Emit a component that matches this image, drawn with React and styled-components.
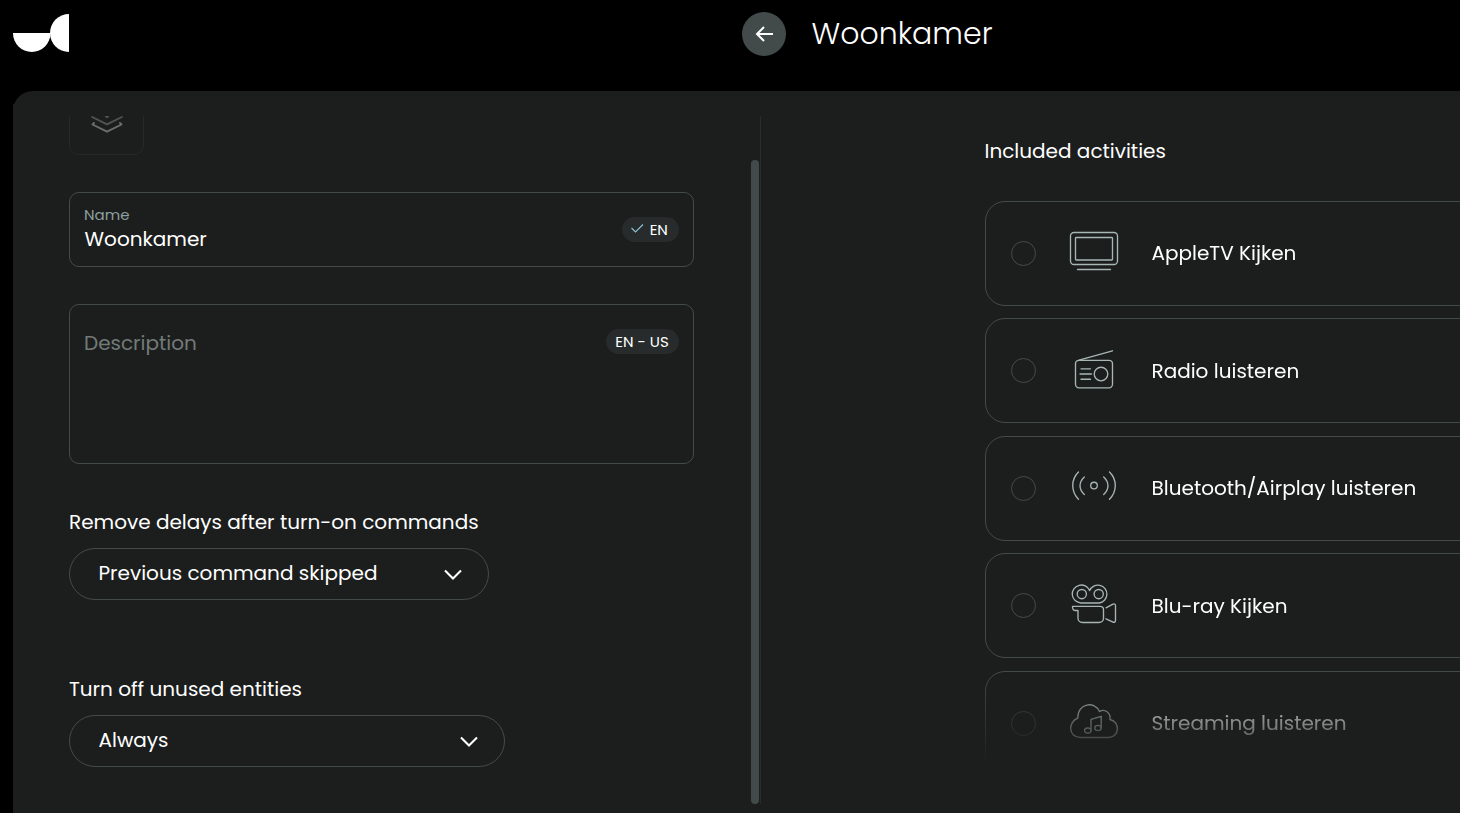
import React from "react";
import styled, { createGlobalStyle } from "styled-components";

const GlobalStyle = createGlobalStyle`
  * { box-sizing: border-box; }
  body {
    margin: 0;
    background: #000;
    overflow: hidden;
    color: #fff;
    font-family: Poppins, Inter, "Liberation Sans", sans-serif;
    font-size: 20px;
    line-height: 30px;
  }
`;

const Page = styled.div`
  width: 1460px;
  height: 813px;
  overflow: hidden;
  display: flex;
  flex-direction: column;
`;

const Header = styled.header`
  height: 91px;
  flex: none;
  display: flex;
  align-items: flex-start;
  padding: 12px 0 0 13px;
`;

const Logo = styled.svg`
  display: block;
  width: 56px;
  height: 38px;
  margin: 2px 673px 0 0;
`;

const BackButton = styled.button`
  width: 44px;
  height: 44px;
  padding: 0;
  border: 0;
  border-radius: 50%;
  background: #434b4a;
  display: grid;
  place-items: center;
`;

const Title = styled.h1`
  margin: 0 0 0 25.5px;
  font-size: 30px;
  font-weight: 300;
  line-height: 44px;
`;

const Panel = styled.main`
  flex: 1;
  margin-left: 13px;
  padding-top: 13px;
  background: #1c1e1d;
  border-top-left-radius: 20px;
  min-height: 0;
`;

const PanelBody = styled.div`
  height: 100%;
  background: #1c1e1d;
  display: flex;
  padding: 12px 0 9px 56px;
`;

const Settings = styled.section`
  flex: none;
  width: 692px;
  height: 688px;
  overflow: hidden;
  display: flex;
  border-right: 1px solid #292c2c;
`;

const SettingsForm = styled.div`
  flex: none;
  width: 625px;
  margin-right: 57px;
  height: 688px;
  overflow: hidden;
`;

const IconTile = styled.div`
  width: 75px;
  height: 75px;
  margin-top: -36px;
  border: 1px solid #262929;
  border-radius: 10px;
  display: grid;
  place-items: center;
`;

const Field = styled.div`
  height: ${(p) => p.$height}px;
  margin-top: 37px;
  padding: ${(p) => p.$padTop}px 14px 0;
  border: 1px solid #434b4a;
  border-radius: 10px;
  display: flex;
  justify-content: space-between;
  align-items: flex-start;
`;

const FieldLabel = styled.div`
  color: #8ea09f;
  font-size: 15px;
  line-height: 22px;
`;

const FieldValue = styled.div`
  padding-left: 0.6px;
  line-height: 26px;
`;

const Placeholder = styled.div`
  color: #737b7a;
  line-height: 28px;
`;

const LangBadge = styled.span`
  margin-top: ${(p) => p.$top}px;
  width: ${(p) => p.$width}px;
  height: 25px;
  padding-right: ${(p) => p.$shift || 1}px;
  border-radius: 13px;
  background: #272b2c;
  font-size: 15px;
  line-height: 25px;
  display: flex;
  justify-content: center;
  align-items: center;
  gap: 5.5px;
  white-space: nowrap;
`;

const Label = styled.div`
  margin-top: ${(p) => p.$top}px;
  margin-bottom: 11px;
  white-space: nowrap;
`;

const Select = styled.div`
  width: ${(p) => p.$width}px;
  height: 52px;
  padding: 0 25px 2px 28.5px;
  border: 1px solid #434b4a;
  border-radius: 26px;
  display: flex;
  align-items: center;
  justify-content: space-between;
  white-space: nowrap;
`;

const Chevron = styled.svg`
  width: 20px;
  height: 12px;
  margin-top: 4px;
`;

const Thumb = styled.div`
  width: 8px;
  height: 644px;
  margin-top: 44px;
  border-radius: 4px;
  background: #434b4a;
  flex: none;
`;

const Activities = styled.section`
  width: 700px;
  flex: none;
  margin-left: 224px;
  padding-top: 20px;
`;

const Heading = styled.h2`
  margin: 0 0 0 -0.5px;
  font-size: inherit;
  font-weight: 400;
`;

const List = styled.div`
  margin-top: 34.8px;
  height: 564px;
  overflow: hidden;
  display: flex;
  flex-direction: column;
  gap: 12.45px;
  mask-image: linear-gradient(#000 474px, transparent 564px);
`;

const Row = styled.div`
  flex: none;
  height: 105px;
  border: 1px solid #434b4a;
  border-radius: 20px;
  display: flex;
  align-items: center;
  padding-left: 25px;
`;

const Radio = styled.span`
  width: 25px;
  height: 25px;
  border: 1px solid #434b4a;
  border-radius: 50%;
`;

const Glyph = styled.svg`
  width: 50px;
  height: 50px;
  margin: 0 32.5px 7px 33px;
  fill: none;
  stroke: #a7b5b5;
  stroke-width: 1.35;
  stroke-linecap: round;
  stroke-linejoin: round;
`;

const RowName = styled.span`
  white-space: nowrap;
`;

const icons = {
  tv: (
    <>
      <rect x="1.5" y="7.5" width="47" height="32" rx="3.5" />
      <rect x="6.5" y="12.5" width="37" height="22.5" rx="0.8" />
      <path d="M8.500 44.500H41.500" />
    </>
  ),
  radio: (
    <g transform="translate(0 0.8)">
      <rect x="6.5" y="17.5" width="37" height="27.5" rx="3.5" />
      <path d="M10 17.300L43.500 8M12 26H21.500M11 31.200H22.500M12 36.400H21.500" />
      <circle cx="32" cy="31.2" r="6.8" />
    </g>
  ),
  signal: (
    <>
      <circle cx="25" cy="25.5" r="3.3" />
      <path d="M9.500 12C1.800 19.500 1.800 31.500 9.500 39.200M15.300 17C9.600 22.500 9.600 29 15.300 34.500M34.700 17C40.400 22.500 40.400 29 34.700 34.500M40.500 12C48.200 19.500 48.200 31.500 40.500 39.200" />
    </>
  ),
  camera: (
    <g transform="translate(0 0.8)">
      <path d="M12 25.200A9 9 0 1 1 20.600 12.800A9 9 0 1 1 30 25.200Z" />
      <circle cx="12.8" cy="16.3" r="4.6" />
      <circle cx="29.7" cy="16.3" r="4.6" />
      <path d="M3.500 28.500H31C33 28.500 34.500 30 34.500 32V40.500C34.500 43 32.500 44.700 30 44.700H13.500C11 44.700 9 43 9 40.500V32.700H6C4.500 32.700 3.500 31 3.500 28.500Z" />
      <path d="M37 30L43.500 26.500C45.500 25.500 46.500 26.300 46.500 28V42.500C46.500 44.300 45.500 45 43.500 44L37 41" />
    </g>
  ),
  cloud: (
    <g transform="translate(0 0.8)">
      <path d="M11 41.700C-1 41 -1 26 8.800 22.200C8.500 7 26 5 30.500 15.800C35.500 12.500 42 17 41 23.700C51.500 26 50.500 41 40 41.700Z" />
      <path d="M22 35V23.500L32.200 20.500V32" />
      <ellipse cx="18.8" cy="34.8" rx="3.2" ry="2.6" />
      <ellipse cx="29" cy="32.2" rx="3.2" ry="2.6" />
    </g>
  ),
};

const activities = [
  { name: "AppleTV Kijken", icon: "tv" },
  { name: "Radio luisteren", icon: "radio" },
  { name: "Bluetooth/Airplay luisteren", icon: "signal" },
  { name: "Blu-ray Kijken", icon: "camera" },
  { name: "Streaming luisteren", icon: "cloud" },
];

function Dropdown({ width, children }) {
  return (
    <Select $width={width}>
      {children}
      <Chevron viewBox="0 0 20 12" fill="none" stroke="#fff" strokeWidth="2.1">
        <path d="M2 1.500L10 9.500L18 1.500" />
      </Chevron>
    </Select>
  );
}

export default function App() {
  return (
    <>
      <GlobalStyle />
      <Page>
        <Header>
          <Logo viewBox="0 0 56 38" fill="#fff">
            <path d="M0 19H37.500A18.750 19 0 0 1 0 19Z" />
            <path d="M56 0V38A19 19 0 0 1 56 0Z" />
          </Logo>
          <BackButton aria-label="Back">
            <svg width="20" height="20" viewBox="0 0 20 20" fill="none" stroke="#fff" strokeWidth="2">
              <path d="M19 10H2.500M10 3L3 10L10 17" />
            </svg>
          </BackButton>
          <Title>Woonkamer</Title>
        </Header>
        <Panel>
          <PanelBody>
            <Settings>
              <SettingsForm>
                <IconTile>
                  <svg width="32" height="32" viewBox="0 0 32 32" fill="none" stroke="#6a6e6e" strokeWidth="1.9" strokeLinejoin="round" strokeLinecap="round">
                    <path d="M15 14.700H17M1.200 15L16 22.300L30.800 15" stroke="#505454" />
                    <path d="M3 21L1.500 22.500L16 29.700L30.500 22.500L29 21" />
                  </svg>
                </IconTile>
                <Field $height={75} $padTop={11}>
                  <div>
                    <FieldLabel>Name</FieldLabel>
                    <FieldValue>Woonkamer</FieldValue>
                  </div>
                  <LangBadge $width={57} $top={13} $shift={3}>
                    <svg width="14" height="14" viewBox="0 0 14 14" fill="none" stroke="#8bbfd0" strokeWidth="1.2">
                      <path d="M1.500 5L5.500 9L13 1.500" />
                    </svg>
                    EN
                  </LangBadge>
                </Field>
                <Field $height={160} $padTop={24}>
                  <Placeholder>Description</Placeholder>
                  <LangBadge $width={73} $top={0}>EN - US</LangBadge>
                </Field>
                <Label $top={43}>Remove delays after turn-on commands</Label>
                <Dropdown width={420}>Previous command skipped</Dropdown>
                <Label $top={74}>Turn off unused entities</Label>
                <Dropdown width={436}>Always</Dropdown>
              </SettingsForm>
              <Thumb />
            </Settings>
            <Activities>
              <Heading>Included activities</Heading>
              <List>
                {activities.map((a) => (
                  <Row key={a.name}>
                    <Radio />
                    <Glyph viewBox="0 0 50 50">{icons[a.icon]}</Glyph>
                    <RowName>{a.name}</RowName>
                  </Row>
                ))}
              </List>
            </Activities>
          </PanelBody>
        </Panel>
      </Page>
    </>
  );
}
